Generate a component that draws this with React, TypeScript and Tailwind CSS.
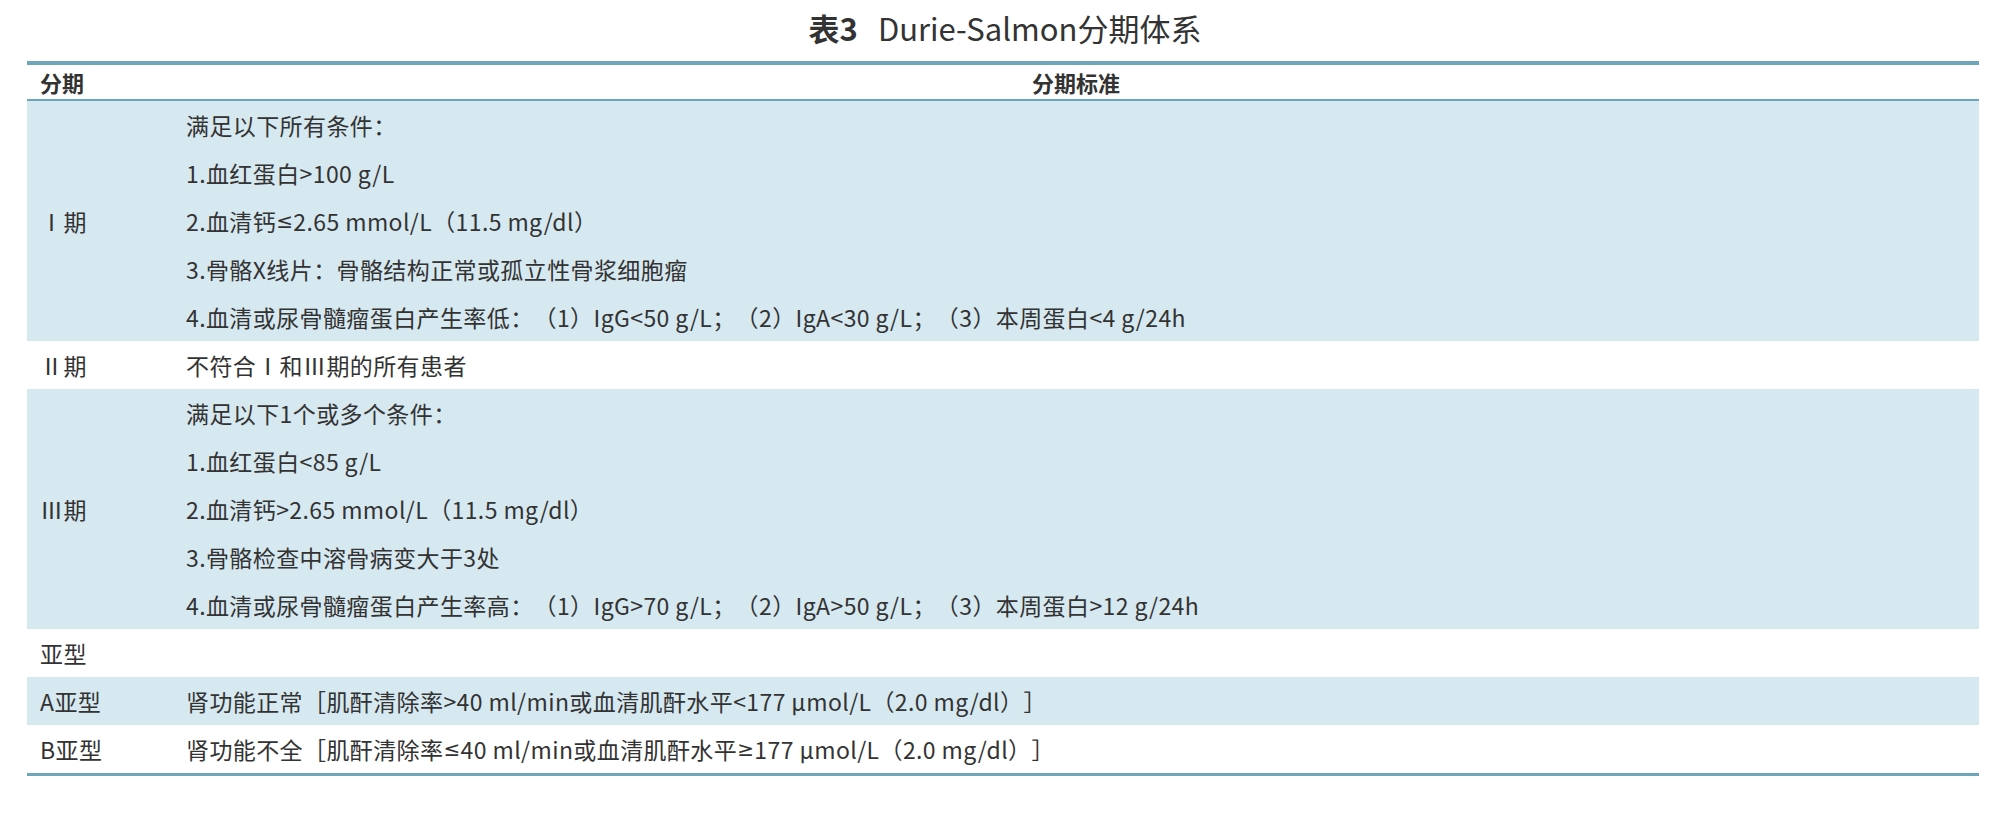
const font = { fontFamily: '"Noto Sans CJK SC", "Noto Sans", sans-serif' };

type Row = { stage: string; lines: string[]; shaded: boolean };

const rows: Row[] = [
  {
    stage: "Ⅰ期",
    shaded: true,
    lines: [
      "满足以下所有条件：",
      "1.血红蛋白>100 g/L",
      "2.血清钙≤2.65 mmol/L（11.5 mg/dl）",
      "3.骨骼X线片：骨骼结构正常或孤立性骨浆细胞瘤",
      "4.血清或尿骨髓瘤蛋白产生率低：（1）IgG<50 g/L；（2）IgA<30 g/L；（3）本周蛋白<4 g/24h",
    ],
  },
  { stage: "Ⅱ期", shaded: false, lines: ["不符合Ⅰ和Ⅲ期的所有患者"] },
  {
    stage: "Ⅲ期",
    shaded: true,
    lines: [
      "满足以下1个或多个条件：",
      "1.血红蛋白<85 g/L",
      "2.血清钙>2.65 mmol/L（11.5 mg/dl）",
      "3.骨骼检查中溶骨病变大于3处",
      "4.血清或尿骨髓瘤蛋白产生率高：（1）IgG>70 g/L；（2）IgA>50 g/L；（3）本周蛋白>12 g/24h",
    ],
  },
  { stage: "亚型", shaded: false, lines: [""] },
  {
    stage: "A亚型",
    shaded: true,
    lines: ["肾功能正常［肌酐清除率>40 ml/min或血清肌酐水平<177 μmol/L（2.0 mg/dl）］"],
  },
  {
    stage: "B亚型",
    shaded: false,
    lines: ["肾功能不全［肌酐清除率≤40 ml/min或血清肌酐水平≥177 μmol/L（2.0 mg/dl）］"],
  },
];

// ≤ / ≥ come out full-width in the CJK face; use a Latin face for them
function Line({ text }: { text: string }) {
  const parts = text.split(/([≤≥])/);
  return (
    <>
      {parts.map((p, i) =>
        p === "≤" || p === "≥" ? (
          <span key={i} style={{ fontFamily: '"DejaVu Sans", sans-serif' }} className="text-[20px]">
            {p}
          </span>
        ) : (
          <span key={i}>{p}</span>
        )
      )}
    </>
  );
}

export default function App() {
  return (
    <div className="w-[2010px] h-[834px] bg-white text-[#333333] [text-spacing-trim:space-all]" style={font}>
      <h1 className="pt-[8px] mb-[13px] text-center text-[31px] leading-[40px] font-normal">
        <span className="font-bold">表3</span>
        <span className="ml-[20px]">Durie-Salmon分期体系</span>
      </h1>

      <div className="ml-[27px] w-[1952px] border-t-4 border-b-[3px] border-[#6da5bb]">
        {/* Header */}
        <div className="grid grid-cols-[146px_1fr] h-[36px] border-b-2 border-[#6da5bb] text-[22px] font-bold">
          <div className="flex items-center pl-[13px]">分期</div>
          <div className="flex items-center justify-center">分期标准</div>
        </div>

        {/* Body */}
        {rows.map((row) => (
          <div
            key={row.stage}
            className={`grid grid-cols-[146px_1fr] text-[23px] tracking-[0.4px] ${row.shaded ? "bg-[#d6e8f0]" : "bg-white"}`}
          >
            <div className="flex items-center pl-[13px]">{row.stage}</div>
            <div className="pl-[13px]">
              {row.lines.map((line, i) => (
                <div key={i} className="h-[48px] flex items-center whitespace-nowrap">
                  <Line text={line} />
                </div>
              ))}
            </div>
          </div>
        ))}
      </div>
    </div>
  );
}
